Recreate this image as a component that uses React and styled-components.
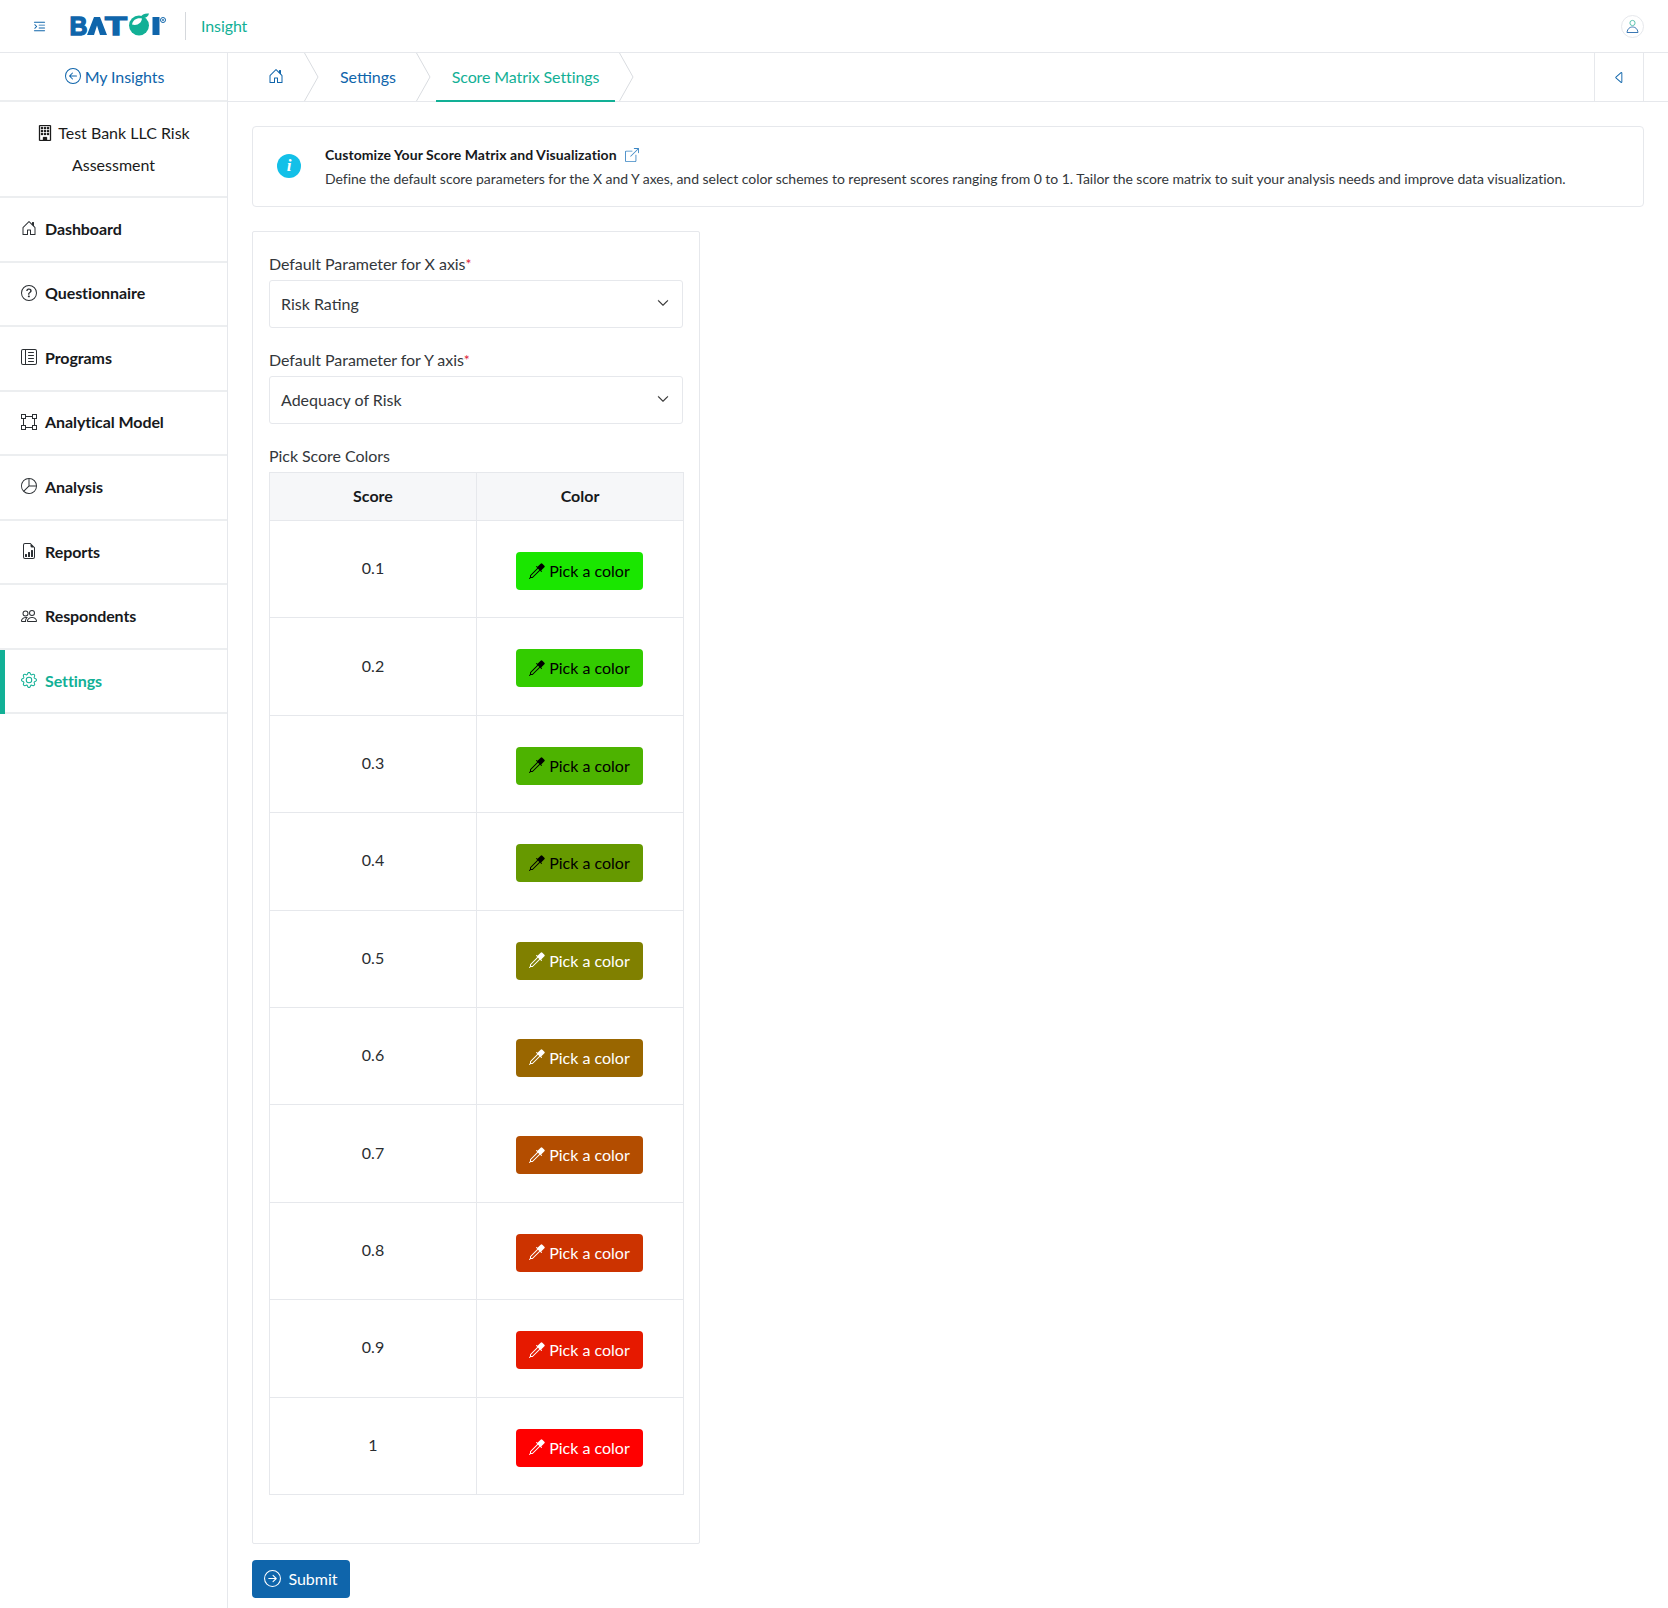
import React from 'react';
import styled, { createGlobalStyle } from 'styled-components';
import {
  BsArrowLeftCircle,
  BsArrowRightCircle,
  BsBoundingBox,
  BsBoxArrowUpRight,
  BsBuilding,
  BsCaretLeft,
  BsChevronDown,
  BsEyedropper,
  BsFileEarmarkBarGraph,
  BsGear,
  BsHouseDoor,
  BsLayoutTextSidebarReverse,
  BsPeople,
  BsPieChart,
  BsQuestionCircle,
  BsTextIndentLeft,
} from 'react-icons/bs';

const BLUE = '#0f65ab';
const TEAL = '#12b096';
const LINE = '#e6e8ec';
const SOFT_LINE = '#eceef0';

const GlobalStyle = createGlobalStyle`
  html, body {
    margin: 0;
    padding: 0;
    background: #fff;
  }
  body {
    font-family: 'Lato', 'Open Sans', sans-serif;
    color: #222;
  }
  * {
    box-sizing: border-box;
  }
`;

const Page = styled.div`
  width: 1668px;
  height: 1608px;
  overflow: hidden;
  display: flex;
  flex-direction: column;
`;

const TopBar = styled.header`
  height: 53px;
  flex: none;
  display: flex;
  align-items: center;
  padding: 0 24px 0 32px;
  border-bottom: 1px solid ${LINE};
`;

const MenuToggle = styled.span`
  display: flex;
  color: ${BLUE};
  font-size: 15px;
  margin-right: 21px;
`;

const Divider = styled.span`
  width: 1px;
  height: 28px;
  background: #d5d8dc;
  margin: 0 15px 0 19px;
`;

const Product = styled.span`
  color: ${TEAL};
  font-size: 16px;
  letter-spacing: -0.1px;
  padding-bottom: 2px;
`;

const Avatar = styled.span`
  margin-left: auto;
  width: 23px;
  height: 23px;
  border-radius: 50%;
  border: 1px solid ${LINE};
  display: flex;
  align-items: center;
  justify-content: center;
`;

const Shell = styled.div`
  flex: 1;
  display: flex;
  min-height: 0;
`;

const Sidebar = styled.aside`
  width: 228px;
  flex: none;
  border-right: 1px solid ${LINE};
`;

const BackLink = styled.div`
  height: 49px;
  display: flex;
  align-items: center;
  justify-content: center;
  gap: 4px;
  color: ${BLUE};
  font-size: 16px;
  letter-spacing: -0.08px;
  padding: 0 0 1px 2px;
  border-bottom: 2px solid ${SOFT_LINE};
`;

const Assessment = styled.div`
  height: 96px;
  padding: 15px 16px 0;
  text-align: center;
  font-size: 16px;
  line-height: 32px;
  color: #1b1b1b;
  border-bottom: 2px solid ${SOFT_LINE};

  svg {
    vertical-align: -2px;
    margin-right: 5px;
    stroke: currentColor;
    stroke-width: 0.3px;
  }
`;

const MenuItem = styled.div`
  position: relative;
  height: 64.55px;
  display: flex;
  align-items: center;
  gap: 8px;
  padding: 0 0 2px 21px;
  font-size: 16px;
  font-weight: 700;
  letter-spacing: -0.08px;
  color: ${(p) => (p.$active ? TEAL : '#17191c')};
  border-bottom: 2px solid ${SOFT_LINE};

  svg {
    flex: none;
    color: ${(p) => (p.$active ? TEAL : '#2b2f33')};
  }

  ${(p) =>
    p.$active &&
    `
    &::before {
      content: '';
      position: absolute;
      left: 0;
      top: 0;
      bottom: -2px;
      width: 5px;
      background: ${TEAL};
    }
  `}
`;

const Main = styled.main`
  flex: 1;
  min-width: 0;
`;

const Crumbs = styled.nav`
  height: 49px;
  display: flex;
  align-items: stretch;
  border-bottom: 1px solid ${LINE};
`;

const Crumb = styled.div`
  position: relative;
  display: flex;
  align-items: center;
  justify-content: center;
  width: ${(p) => p.$width}px;
  color: ${(p) => (p.$current ? TEAL : BLUE)};
  font-size: 16px;
  letter-spacing: ${(p) => (p.$current ? '-0.1px' : '0')};
  padding: 0 0 2px ${(p) => p.$inset || 0}px;
  margin: 0 ${(p) => (p.$current ? 4 : 0)}px 0 ${(p) => (p.$current ? 5 : 0)}px;

  ${(p) =>
    p.$current &&
    `
    &::after {
      content: '';
      position: absolute;
      left: 0;
      right: 0;
      bottom: -1px;
      height: 2px;
      background: ${TEAL};
    }
  `}
`;

const CrumbSep = styled.svg`
  flex: none;
  width: 15px;
  height: 48px;
`;

const Collapse = styled.div`
  margin-left: auto;
  margin-right: 24px;
  width: 50px;
  display: flex;
  align-items: center;
  justify-content: center;
  color: ${BLUE};
  font-size: 15px;
  border-left: 1px solid ${LINE};
  border-right: 1px solid ${LINE};
`;

const Content = styled.div`
  padding: 24px 24px 0 24px;
`;

const InfoCard = styled.section`
  height: 81px;
  display: flex;
  align-items: center;
  gap: 24px;
  padding-left: 24px;
  border: 1px solid ${LINE};
  border-radius: 4px;
`;

const InfoBadge = styled.span`
  flex: none;
  width: 24px;
  height: 24px;
  margin-top: -2px;
  border-radius: 50%;
  background: #13c0e8;
  color: #fff;
  display: flex;
  align-items: center;
  justify-content: center;
  font-family: 'Liberation Serif', serif;
  font-style: italic;
  font-weight: 700;
  font-size: 17px;
`;

const InfoTitle = styled.div`
  font-size: 14px;
  font-weight: 700;
  letter-spacing: 0.07px;
  line-height: 24px;
  color: #17191c;

  svg {
    color: #3b86c4;
    margin-left: 8px;
    vertical-align: -2px;
  }
`;

const InfoText = styled.div`
  font-size: 14px;
  letter-spacing: -0.03px;
  line-height: 24px;
  color: #33373b;
`;

const FormCard = styled.section`
  width: 448px;
  height: 1313px;
  margin-top: 24px;
  padding: 20px 16px 0;
  border: 1px solid ${LINE};
  border-radius: 2px;
`;

const FieldLabel = styled.div`
  font-size: 16px;
  letter-spacing: -0.05px;
  line-height: 24px;
  height: 28px;
  color: #33373b;
`;

const Required = styled.span`
  color: #e0243a;
  font-size: 14px;
  vertical-align: 1px;
`;

const Select = styled.div`
  height: 48px;
  display: flex;
  align-items: center;
  justify-content: space-between;
  padding: 0 13px 2px 11px;
  margin-bottom: 20px;
  font-size: 16px;
  color: #33373b;
  border: 1px solid ${LINE};
  border-radius: 3px;

  svg {
    font-size: 12px;
    color: #222;
    stroke: currentColor;
    stroke-width: 0.6px;
  }
`;

const HeadRow = styled.div`
  display: grid;
  grid-template-columns: 207px 208px;
`;

const HeadCell = styled.div`
  height: 49px;
  display: flex;
  align-items: center;
  justify-content: center;
  padding-bottom: 2px;
  font-size: 16px;
  font-weight: 700;
  color: #17191c;
  background: #f6f7f9;
  border: 1px solid ${LINE};
  border-right-width: ${(p) => (p.$last ? 1 : 0)}px;
`;

const ScoreTable = styled.div`
  display: grid;
  grid-template-columns: 207px 208px;
  grid-auto-rows: 97.4px;
`;

const ScoreCell = styled.div`
  display: flex;
  align-items: center;
  justify-content: center;
  padding-bottom: 3px;
  font-size: 16px;
  color: #2a2d31;
  border-left: 1px solid ${LINE};
  border-bottom: 1px solid ${LINE};
`;

const ColorCell = styled.div`
  display: flex;
  justify-content: center;
  padding: 31px 1px 0 0;
  border-left: 1px solid ${LINE};
  border-right: 1px solid ${LINE};
  border-bottom: 1px solid ${LINE};
`;

const PickButton = styled.button`
  width: 127px;
  height: 38px;
  display: flex;
  align-items: center;
  justify-content: center;
  gap: 4px;
  font-family: inherit;
  font-size: 16px;
  color: ${(p) => p.$ink};
  background: ${(p) => p.$bg};
  border: none;
  border-radius: 4px;
  padding: 0 0 1px;
`;

const SubmitButton = styled.button`
  width: 98px;
  height: 38px;
  margin-top: 16px;
  display: flex;
  align-items: center;
  justify-content: center;
  gap: 7px;
  font-family: inherit;
  font-size: 16px;
  color: #fff;
  background: ${BLUE};
  border: none;
  border-radius: 4px;
  padding: 0 0 1px;
`;

const menu = [
  { label: 'Dashboard', Icon: BsHouseDoor },
  { label: 'Questionnaire', Icon: BsQuestionCircle },
  { label: 'Programs', Icon: BsLayoutTextSidebarReverse },
  { label: 'Analytical Model', Icon: BsBoundingBox },
  { label: 'Analysis', Icon: BsPieChart },
  { label: 'Reports', Icon: BsFileEarmarkBarGraph },
  { label: 'Respondents', Icon: BsPeople },
  { label: 'Settings', Icon: BsGear, active: true },
];

const scores = ['0.1', '0.2', '0.3', '0.4', '0.5', '0.6', '0.7', '0.8', '0.9', '1'];

// green to red over the 0-1 range
const scoreColor = (score) => {
  const v = parseFloat(score);
  return `rgb(${Math.round(255 * v)}, ${Math.round(255 * (1 - v))}, 0)`;
};

const Logo = () => (
  <svg width="98" height="30" viewBox="0 0 98 30" aria-label="Batoi logo">
    <text x="1.500" y="24" fill={BLUE} stroke={BLUE} strokeWidth="1.300" fontFamily="Liberation Sans" fontWeight="700" fontSize="25" textLength="18" lengthAdjust="spacingAndGlyphs">B</text>
    <path d="M19 24 L26 6 H32 L39 24 H32 L29 14.500 L26 24 Z" fill={BLUE} />
    <text x="37" y="24" fill={BLUE} stroke={BLUE} strokeWidth="1.300" fontFamily="Liberation Sans" fontWeight="700" fontSize="25" textLength="22" lengthAdjust="spacingAndGlyphs">T</text>
    <circle cx="71" cy="14.500" r="10" fill={TEAL} />
    <path d="M64 13.500 C65 8.500 69 6.500 74 7.500 C73.500 12 69.500 15 64 13.500 Z" fill="#fff" />
    <path d="M72.500 6.500 C73.500 3.500 77 2 81 2.500 C80.500 6 76.500 8 72.500 6.500 Z" fill={TEAL} />
    <rect x="84.500" y="6" width="7" height="18" fill={BLUE} />
    <circle cx="95" cy="9" r="2.500" fill="none" stroke={BLUE} strokeWidth="1" />
    <circle cx="95" cy="9" r="0.900" fill={BLUE} />
  </svg>
);

const Separator = () => (
  <CrumbSep viewBox="0 0 15 48" fill="none" stroke="#d9dce0" strokeWidth="1">
    <path d="M0.500 0 L14 24 L0.500 48" />
  </CrumbSep>
);

const App = () => (
  <Page>
    <GlobalStyle />
    <TopBar>
      <MenuToggle>
        <BsTextIndentLeft />
      </MenuToggle>
      <Logo />
      <Divider />
      <Product>Insight</Product>
      <Avatar>
        <svg width="15" height="15" viewBox="0 0 15 15" fill="none" strokeWidth="1">
          <circle cx="7.500" cy="4" r="2.600" stroke="#5cc4b0" />
          <path d="M2 13.500 C2.500 9.500 5 8 7.500 8 C10 8 12.500 9.500 13 13.500 Z" stroke="#3b78b4" />
        </svg>
      </Avatar>
    </TopBar>
    <Shell>
      <Sidebar>
        <BackLink>
          <BsArrowLeftCircle size={16} />
          My Insights
        </BackLink>
        <Assessment>
          <BsBuilding size={16} />
          Test Bank LLC Risk Assessment
        </Assessment>
        {menu.map(({ label, Icon, active }) => (
          <MenuItem key={label} $active={active}>
            <Icon size={16} />
            {label}
          </MenuItem>
        ))}
      </Sidebar>
      <Main>
        <Crumbs>
          <Crumb $width={76} $inset={20}>
            <BsHouseDoor size={16} />
          </Crumb>
          <Separator />
          <Crumb $width={97} $inset={1}>Settings</Crumb>
          <Separator />
          <Crumb $width={179} $current>
            Score Matrix Settings
          </Crumb>
          <Separator />
          <Collapse>
            <BsCaretLeft />
          </Collapse>
        </Crumbs>
        <Content>
          <InfoCard>
            <InfoBadge>i</InfoBadge>
            <div>
              <InfoTitle>
                Customize Your Score Matrix and Visualization
                <BsBoxArrowUpRight size={14} />
              </InfoTitle>
              <InfoText>
                Define the default score parameters for the X and Y axes, and select color schemes to
                represent scores ranging from 0 to 1. Tailor the score matrix to suit your analysis
                needs and improve data visualization.
              </InfoText>
            </div>
          </InfoCard>
          <FormCard>
            <FieldLabel>
              Default Parameter for X axis<Required>*</Required>
            </FieldLabel>
            <Select>
              Risk Rating
              <BsChevronDown />
            </Select>
            <FieldLabel>
              Default Parameter for Y axis<Required>*</Required>
            </FieldLabel>
            <Select>
              Adequacy of Risk
              <BsChevronDown />
            </Select>
            <FieldLabel>Pick Score Colors</FieldLabel>
            <HeadRow>
              <HeadCell>Score</HeadCell>
              <HeadCell $last>Color</HeadCell>
            </HeadRow>
            <ScoreTable>
              {scores.map((score) => (
                <React.Fragment key={score}>
                  <ScoreCell>{score}</ScoreCell>
                  <ColorCell>
                    <PickButton $bg={scoreColor(score)} $ink={parseFloat(score) < 0.5 ? '#000' : '#fff'}>
                      <BsEyedropper size={16} />
                      Pick a color
                    </PickButton>
                  </ColorCell>
                </React.Fragment>
              ))}
            </ScoreTable>
          </FormCard>
          <SubmitButton>
            <BsArrowRightCircle size={17} />
            Submit
          </SubmitButton>
        </Content>
      </Main>
    </Shell>
  </Page>
);

export default App;
